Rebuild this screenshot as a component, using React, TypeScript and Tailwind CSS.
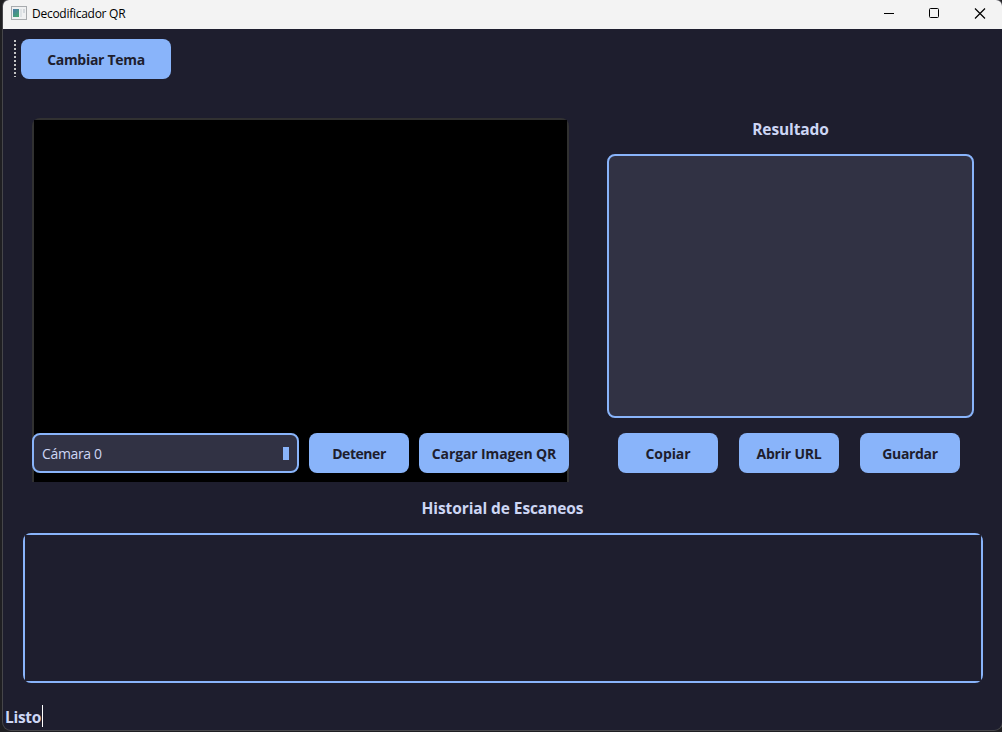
import React from "react";

const font = "font-['Open_Sans','Noto_Sans',sans-serif]";

function Button({ label, className }: { label: string; className: string }) {
  return (
    <button
      className={`flex h-10 shrink-0 items-center justify-center whitespace-nowrap rounded-lg bg-[#89b4fa] pt-px text-[14px] font-bold leading-5 text-[#1e1e2e] ${className}`}
    >
      {label}
    </button>
  );
}

function TitleBar() {
  return (
    <header className="flex h-[29px] shrink-0 items-center bg-[#f3f3f3] pl-2 text-black">
      <svg width="16" height="14" viewBox="0 0 16 14" className="-mt-[3px] shrink-0">
        <defs>
          <linearGradient id="pane" x1="0" y1="0" x2="0.6" y2="1">
            <stop offset="0" stopColor="#4b78a8" />
            <stop offset="1" stopColor="#46a374" />
          </linearGradient>
        </defs>
        <rect x="0.5" y="0.5" width="15" height="13" fill="#f0f1f2" stroke="#a8abae" />
        <rect x="2" y="3" width="6" height="8" fill="url(#pane)" />
        <rect x="9" y="3" width="2" height="8" fill="#dfe3e6" />
        <rect x="12" y="3" width="2" height="4" fill="#d3d8dc" />
      </svg>
      <span className="ml-[5px] flex-1 whitespace-nowrap text-[12px] leading-4 tracking-[-0.27px] -mt-px">
        Decodificador QR
      </span>
      <svg width="120" height="29" viewBox="0 0 120 29" fill="none" stroke="#000" className="shrink-0">
        <path d="M2 13.5h10" />
        <rect x="47.5" y="8.5" width="9" height="9" rx="1" />
        <path d="M93 8.5l10 10M103 8.5l-10 10" strokeWidth="1.2" />
      </svg>
    </header>
  );
}

export default function App() {
  return (
    <div className={`relative h-[732px] w-[1002px] overflow-hidden bg-[#1f1f22] pl-[3px] ${font}`}>
      <main className="flex h-[730px] flex-col overflow-hidden rounded-t-md rounded-b-lg bg-[#1e1e2e] shadow-[0_0_0_1px_#46464a]">
        <TitleBar />
        <div className="flex shrink-0 pl-[11px] pt-[10px]">
          <svg width="2" height="40" className="mr-[5px] shrink-0">
            <path d="M1 1v37" stroke="#c4c4c4" strokeWidth="2" strokeDasharray="2 2" />
          </svg>
          <Button label="Cambiar Tema" className="w-[150px] tracking-[-0.3px]" />
        </div>
        <div className="mt-[39px] flex h-[364px] shrink-0 pl-[29px]">
          <section className="flex h-[364px] w-[537px] shrink-0 flex-col rounded-t-lg bg-[#313131] px-[2px] pt-[2px]">
            <div className="flex flex-1 flex-col justify-end bg-black pb-[9px]">
              <div className="-mx-[2px] flex gap-[10px]">
                <div className="flex h-10 w-[267px] items-center justify-between rounded-lg border-2 border-[#89b4fa] bg-[#313244] px-2 text-[14px] text-[#cdd6f4]">
                  <span className="pt-px tracking-[-0.35px]">Cámara 0</span>
                  <span className="h-[13px] w-[6px] bg-[#89b4fa]" />
                </div>
                <Button label="Detener" className="w-[100px] tracking-[-0.45px]" />
                <Button label="Cargar Imagen QR" className="w-[150px] tracking-[-0.12px]" />
              </div>
            </div>
          </section>
          <section className="ml-[38px] flex w-[367px] flex-col">
            <h2 className="h-9 text-center text-[15.5px] font-bold leading-[22px] tracking-[-0.1px] text-[#cdd6f4]">
              Resultado
            </h2>
            <div className="h-[264px] shrink-0 rounded-lg border-2 border-[#89b4fa] bg-[#313244]" />
            <div className="mt-[15px] flex gap-[21px] pl-[11px]">
              <Button label="Copiar" className="w-[100px] tracking-[-0.1px]" />
              <Button label="Abrir URL" className="w-[100px] tracking-[-0.2px]" />
              <Button label="Guardar" className="w-[100px] tracking-[-0.35px]" />
            </div>
          </section>
        </div>
        <h2 className="mt-[15px] h-9 shrink-0 text-center text-[15.5px] font-bold leading-[22px] tracking-[-0.1px] text-[#cdd6f4]">
          Historial de Escaneos
        </h2>
        <div className="ml-5 flex h-[150px] w-[960px] shrink-0 rounded-lg bg-[#89b4fa] p-[2px]">
          <div className="flex-1 bg-[#1e1e2e]" />
        </div>
        <footer className="mt-[22px] flex h-[22px] shrink-0 pl-[2px]">
          <span className="w-[38px] border-r border-white text-[15.5px] font-bold leading-6 tracking-[-0.3px] text-[#cdd6f4]">
            Listo
          </span>
        </footer>
      </main>
    </div>
  );
}
